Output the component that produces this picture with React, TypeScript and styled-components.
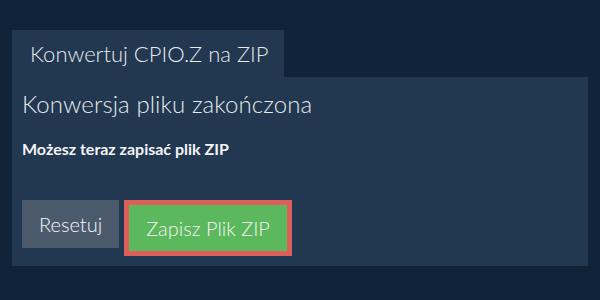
import styled, { createGlobalStyle } from 'styled-components';

const GlobalStyle = createGlobalStyle`
  html, body {
    margin: 0;
    padding: 0;
    background: #112339;
  }
  body {
    font-family: Lato, "Noto Sans", sans-serif;
    color: #eef0f2;
  }
`;

const Page = styled.div`
  width: 600px;
  height: 300px;
  box-sizing: border-box;
  padding: 30px 12px 0;
  background: #112339;
`;

const Tab = styled.div`
  display: inline-block;
  height: 47px;
  padding: 0 18px;
  box-sizing: border-box;
  width: 272px;
  white-space: nowrap;
  background: #223750;
  font-size: 22px;
  font-weight: 300;
  line-height: 47px;
  color: #e6e9ec;
`;

const Panel = styled.div`
  background: #223750;
  height: 189px;
  box-sizing: border-box;
  padding: 12px 10px 0;
  display: flex;
  flex-direction: column;
`;

const Heading = styled.h1`
  margin: 0;
  font-size: 24px;
  font-weight: 300;
  letter-spacing: 0.08px;
  line-height: 30px;
  color: #e6e9ec;
`;

const Message = styled.p`
  margin: 20px 0 0;
  font-size: 16px;
  font-weight: 700;
  line-height: 20px;
  color: #f2f4f6;
`;

const Actions = styled.div`
  display: flex;
  align-items: flex-start;
  gap: 5px;
  margin-top: 41px;
`;

const Button = styled.button<{ $primary?: boolean }>`
  font-family: Lato, "Noto Sans", sans-serif;
  font-size: 20px;
  font-weight: 300;
  color: #f4f6f8;
  white-space: nowrap;
  border: ${(p) => (p.$primary ? '5px solid #dc5f5a' : 'none')};
  background: ${(p) => (p.$primary ? '#5cb85c' : '#4b5b6d')};
  height: ${(p) => (p.$primary ? '56px' : '48px')};
  padding: 0 17px;
  cursor: pointer;
`;

export default function App() {
  return (
    <>
      <GlobalStyle />
      <Page>
        <Tab>Konwertuj CPIO.Z na ZIP</Tab>
        <Panel>
          <Heading>Konwersja pliku zakończona</Heading>
          <Message>Możesz teraz zapisać plik ZIP</Message>
          <Actions>
            <Button>Resetuj</Button>
            <Button $primary>Zapisz Plik ZIP</Button>
          </Actions>
        </Panel>
      </Page>
    </>
  );
}
